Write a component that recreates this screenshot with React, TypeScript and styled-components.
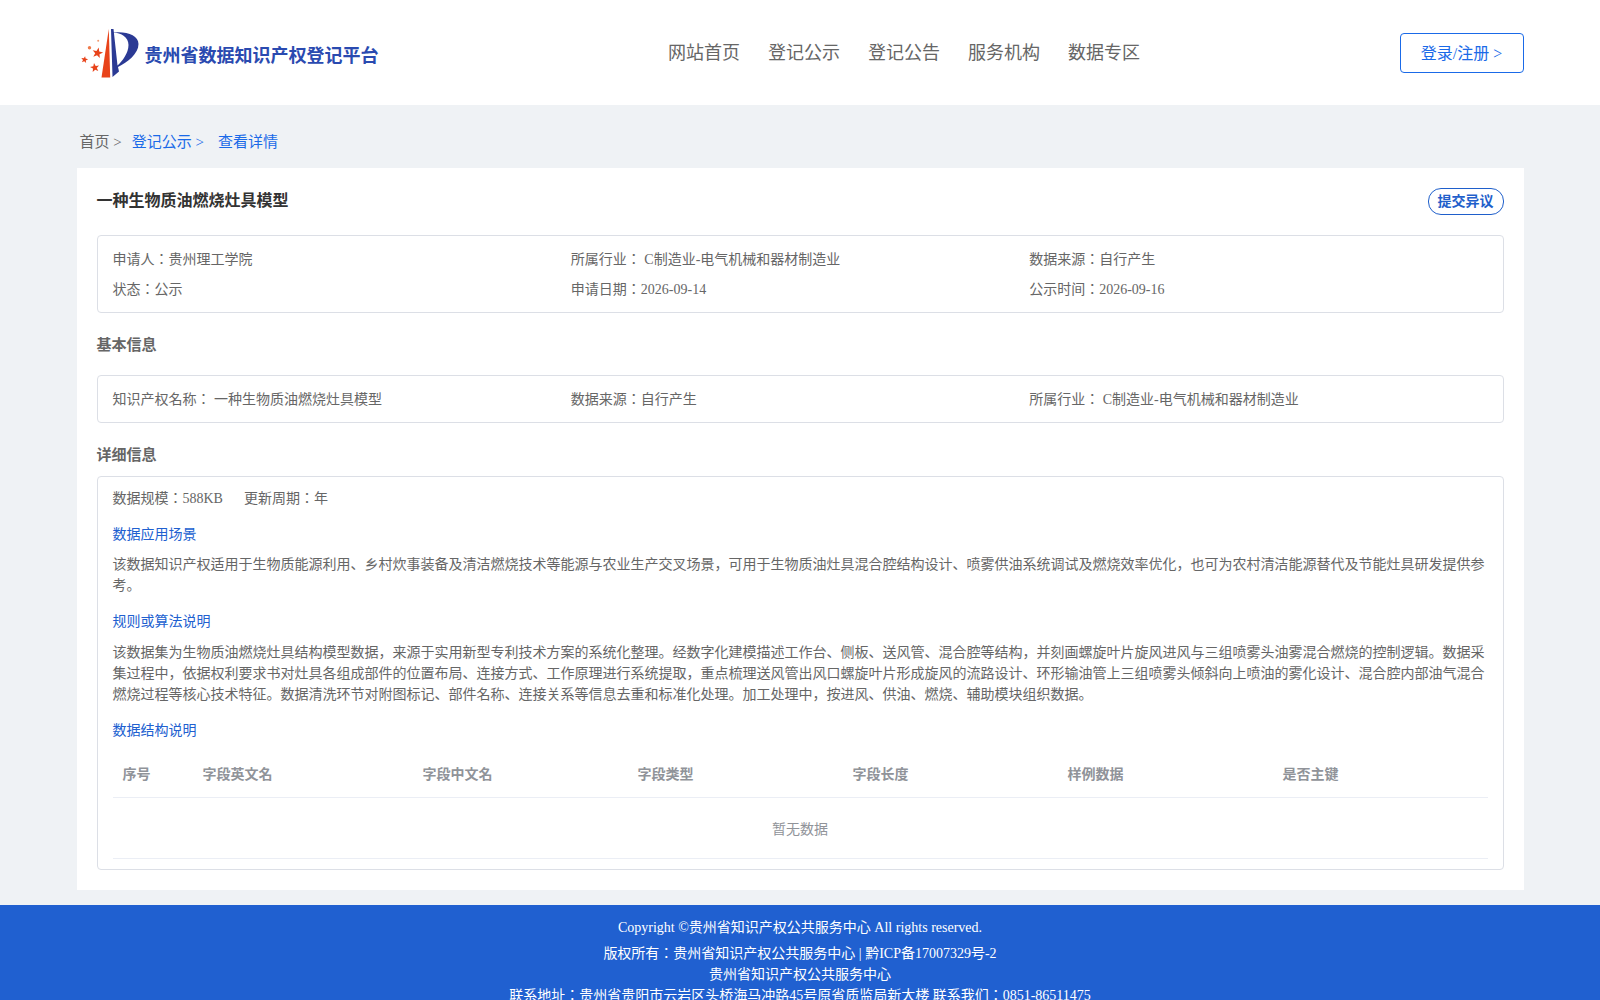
import styled, { createGlobalStyle } from 'styled-components';

const GlobalStyle = createGlobalStyle`
  html, body {
    margin: 0;
    padding: 0;
    background: #eff2f5;
    font-family: "Liberation Serif", "Noto Sans CJK JP", serif;
  }
  * {
    box-sizing: border-box;
  }
`;

const HeaderBar = styled.header`
  height: 105px;
  background: #fff;
`;

const HeaderInner = styled.div`
  width: 1447px;
  height: 100%;
  margin: 0 auto;
  display: flex;
  align-items: center;
`;

const Brand = styled.div`
  display: flex;
  align-items: center;
  flex: none;
`;

const LogoMark = styled.svg`
  width: 70px;
  height: 65px;
  flex: none;
`;

const BrandName = styled.span`
  margin: 2px 0 0 -2px;
  font-size: 18px;
  font-weight: 700;
  color: #2a4ab0;
`;

const Nav = styled.nav`
  flex: 1;
  margin-left: 30px;
  padding-bottom: 3px;
  display: flex;
  justify-content: center;
  gap: 28px;
`;

const NavItem = styled.a`
  font-size: 18px;
  color: #666;
`;

const LoginButton = styled.button`
  flex: none;
  width: 124px;
  height: 40px;
  padding: 0 0 2px;
  background: #fff;
  border: 1px solid #1a6ae8;
  border-radius: 4px;
  font: inherit;
  font-size: 16px;
  color: #1a6ae8;
`;

const Main = styled.main`
  width: 1447px;
  margin: 0 auto;
`;

const Crumbs = styled.div`
  height: 63px;
  padding: 27px 0 0 3px;
  display: flex;
  font-size: 15px;
  line-height: 20px;
`;

const Crumb = styled.a<{ $active?: boolean; $gap: number }>`
  margin-right: ${(props) => props.$gap}px;
  color: ${(props) => (props.$active ? '#1a6ae8' : '#666')};
`;

const Card = styled.section`
  background: #fff;
  padding: 20px;
`;

const TitleRow = styled.div`
  height: 47px;
  display: flex;
  justify-content: space-between;
  align-items: flex-start;
`;

const Title = styled.h1`
  margin: 1px 0 0;
  font-size: 16px;
  line-height: 24px;
  font-weight: 700;
  color: #333;
`;

const ObjectionButton = styled.button`
  width: 76px;
  height: 27px;
  padding: 0 0 3px;
  background: #fff;
  border: 1px solid #1f5fcb;
  border-radius: 13px;
  font: inherit;
  font-size: 14px;
  font-weight: 700;
  color: #1f5fcb;
`;

const Box = styled.div`
  border: 1px solid #dcdfe6;
  border-radius: 4px;
  padding: 0 15px;
`;

const InfoGrid = styled.div<{ $height: number }>`
  display: grid;
  grid-template-columns: repeat(3, 1fr);
  grid-auto-rows: 30px;
  align-content: center;
  height: ${(props) => props.$height}px;
  padding-top: 1px;
`;

const InfoCell = styled.div`
  font-size: 14px;
  line-height: 30px;
  color: #666;
`;

const SectionTitle = styled.h2<{ $height: number }>`
  margin: 0;
  height: ${(props) => props.$height}px;
  padding-top: 21px;
  font-size: 15px;
  line-height: 22px;
  font-weight: 700;
  color: #666;
`;

const DetailMeta = styled.div`
  display: flex;
  gap: 21px;
  padding-top: 11px;
  font-size: 14px;
  line-height: 21px;
  color: #666;
`;

const SubTitle = styled.h3`
  margin: 15px 0 0;
  font-size: 14px;
  line-height: 21px;
  font-weight: 400;
  color: #2060d0;
`;

const Paragraph = styled.p<{ $top: number }>`
  margin: ${(props) => props.$top}px 0 0;
  font-size: 14px;
  line-height: 21px;
  color: #666;
`;

const FieldTable = styled.table`
  width: 100%;
  margin-top: 8px;
  border-collapse: collapse;
  table-layout: fixed;
  font-size: 14px;
`;

const HeadCell = styled.th<{ $width?: number }>`
  width: ${(props) => (props.$width ? `${props.$width}px` : 'auto')};
  height: 48px;
  padding: 0 10px;
  border-bottom: 1px solid #ebeef5;
  text-align: left;
  font-weight: 700;
  color: #909399;
`;

const EmptyCell = styled.td`
  height: 61px;
  border-bottom: 1px solid #ebeef5;
  text-align: center;
  color: #909399;
`;

const TableBox = styled(Box)`
  padding-bottom: 10px;
`;

const Footer = styled.footer`
  margin-top: 15px;
  background: #2060d0;
  padding: 12px 0 0;
  text-align: center;
  font-size: 14px;
  line-height: 21px;
  color: #fff;
`;

const FooterLine = styled.div<{ $top?: number }>`
  margin-top: ${(props) => props.$top ?? 0}px;
`;

const columns = [
  { label: '序号', width: 80 },
  { label: '字段英文名', width: 220 },
  { label: '字段中文名', width: 215 },
  { label: '字段类型', width: 215 },
  { label: '字段长度', width: 215 },
  { label: '样例数据', width: 215 },
  { label: '是否主键' },
];

// five point star around a centre, r is the outer radius
const starPoints = (cx: number, cy: number, r: number, turn: number) => (
  Array.from({ length: 10 }, (_, i) => {
    const radius = i % 2 === 0 ? r : r * 0.42;
    const angle = ((i * 36 - 90 + turn) * Math.PI) / 180;
    return `${(cx + radius * Math.cos(angle)).toFixed(1)},${(cy + radius * Math.sin(angle)).toFixed(1)}`;
  }).join(' ')
);

const stars = [
  { cx: 22, cy: 33, r: 5.6, turn: 12 },
  { cx: 19.3, cy: 47.7, r: 4.8, turn: -10 },
  { cx: 9, cy: 39.7, r: 3.6, turn: 10 },
];

const Logo = () => (
  <LogoMark viewBox='1.5 0 70 65'>
    {stars.map((d, i) => <polygon key={i} points={starPoints(d.cx, d.cy, d.r, d.turn)} fill='#e8431a' />)}
    <circle cx='14' cy='27.7' r='1.7' fill='#ef7a4a' />
    <circle cx='22.7' cy='20.7' r='1' fill='#f29a70' />
    <path d='M33.3 9 L34.7 57.5 L26 57.5 Z' fill='#e8431a' />
    <path d='M35.5 9 L37 57 L43.5 51.5 L42.5 47 C52 42 63 34 63 24 C63 15 51 11 37.5 12.5 C46 13 53 17 53 25 C53 33 47 41 42 45.5 L38 9 Z' fill='#2b3a94' />
  </LogoMark>
);

export default function App() {
  return (
    <>
      <GlobalStyle />
      <HeaderBar>
        <HeaderInner>
          <Brand>
            <Logo />
            <BrandName>贵州省数据知识产权登记平台</BrandName>
          </Brand>
          <Nav>
            {['网站首页', '登记公示', '登记公告', '服务机构', '数据专区'].map((d) => <NavItem key={d}>{d}</NavItem>)}
          </Nav>
          <LoginButton>登录/注册 &gt;</LoginButton>
        </HeaderInner>
      </HeaderBar>
      <Main>
        <Crumbs>
          <Crumb $gap={10}>首页 &gt;</Crumb>
          <Crumb $active $gap={14}>登记公示 &gt;</Crumb>
          <Crumb $active $gap={0}>查看详情</Crumb>
        </Crumbs>
        <Card>
          <TitleRow>
            <Title>一种生物质油燃烧灶具模型</Title>
            <ObjectionButton>提交异议</ObjectionButton>
          </TitleRow>
          <Box>
            <InfoGrid $height={76}>
              <InfoCell>申请人：贵州理工学院</InfoCell>
              <InfoCell>所属行业： C制造业-电气机械和器材制造业</InfoCell>
              <InfoCell>数据来源：自行产生</InfoCell>
              <InfoCell>状态：公示</InfoCell>
              <InfoCell>申请日期：2026-09-14</InfoCell>
              <InfoCell>公示时间：2026-09-16</InfoCell>
            </InfoGrid>
          </Box>
          <SectionTitle $height={62}>基本信息</SectionTitle>
          <Box>
            <InfoGrid $height={46}>
              <InfoCell>知识产权名称： 一种生物质油燃烧灶具模型</InfoCell>
              <InfoCell>数据来源：自行产生</InfoCell>
              <InfoCell>所属行业： C制造业-电气机械和器材制造业</InfoCell>
            </InfoGrid>
          </Box>
          <SectionTitle $height={53}>详细信息</SectionTitle>
          <TableBox>
            <DetailMeta>
              <span>数据规模：588KB</span>
              <span>更新周期：年</span>
            </DetailMeta>
            <SubTitle>数据应用场景</SubTitle>
            <Paragraph $top={9}>该数据知识产权适用于生物质能源利用、乡村炊事装备及清洁燃烧技术等能源与农业生产交叉场景，可用于生物质油灶具混合腔结构设计、喷雾供油系统调试及燃烧效率优化，也可为农村清洁能源替代及节能灶具研发提供参考。</Paragraph>
            <SubTitle>规则或算法说明</SubTitle>
            <Paragraph $top={10}>该数据集为生物质油燃烧灶具结构模型数据，来源于实用新型专利技术方案的系统化整理。经数字化建模描述工作台、侧板、送风管、混合腔等结构，并刻画螺旋叶片旋风进风与三组喷雾头油雾混合燃烧的控制逻辑。数据采集过程中，依据权利要求书对灶具各组成部件的位置布局、连接方式、工作原理进行系统提取，重点梳理送风管出风口螺旋叶片形成旋风的流路设计、环形输油管上三组喷雾头倾斜向上喷油的雾化设计、混合腔内部油气混合燃烧过程等核心技术特征。数据清洗环节对附图标记、部件名称、连接关系等信息去重和标准化处理。加工处理中，按进风、供油、燃烧、辅助模块组织数据。</Paragraph>
            <SubTitle>数据结构说明</SubTitle>
            <FieldTable>
              <thead>
                <tr>
                  {columns.map((d) => <HeadCell key={d.label} $width={d.width}>{d.label}</HeadCell>)}
                </tr>
              </thead>
              <tbody>
                <tr>
                  <EmptyCell colSpan={7}>暂无数据</EmptyCell>
                </tr>
              </tbody>
            </FieldTable>
          </TableBox>
        </Card>
      </Main>
      <Footer>
        <FooterLine>Copyright ©贵州省知识产权公共服务中心 All rights reserved.</FooterLine>
        <FooterLine $top={5}>版权所有：贵州省知识产权公共服务中心 | 黔ICP备17007329号-2</FooterLine>
        <FooterLine>贵州省知识产权公共服务中心</FooterLine>
        <FooterLine>联系地址：贵州省贵阳市云岩区头桥海马冲路45号原省质监局新大楼 联系我们：0851-86511475</FooterLine>
      </Footer>
    </>
  );
}
